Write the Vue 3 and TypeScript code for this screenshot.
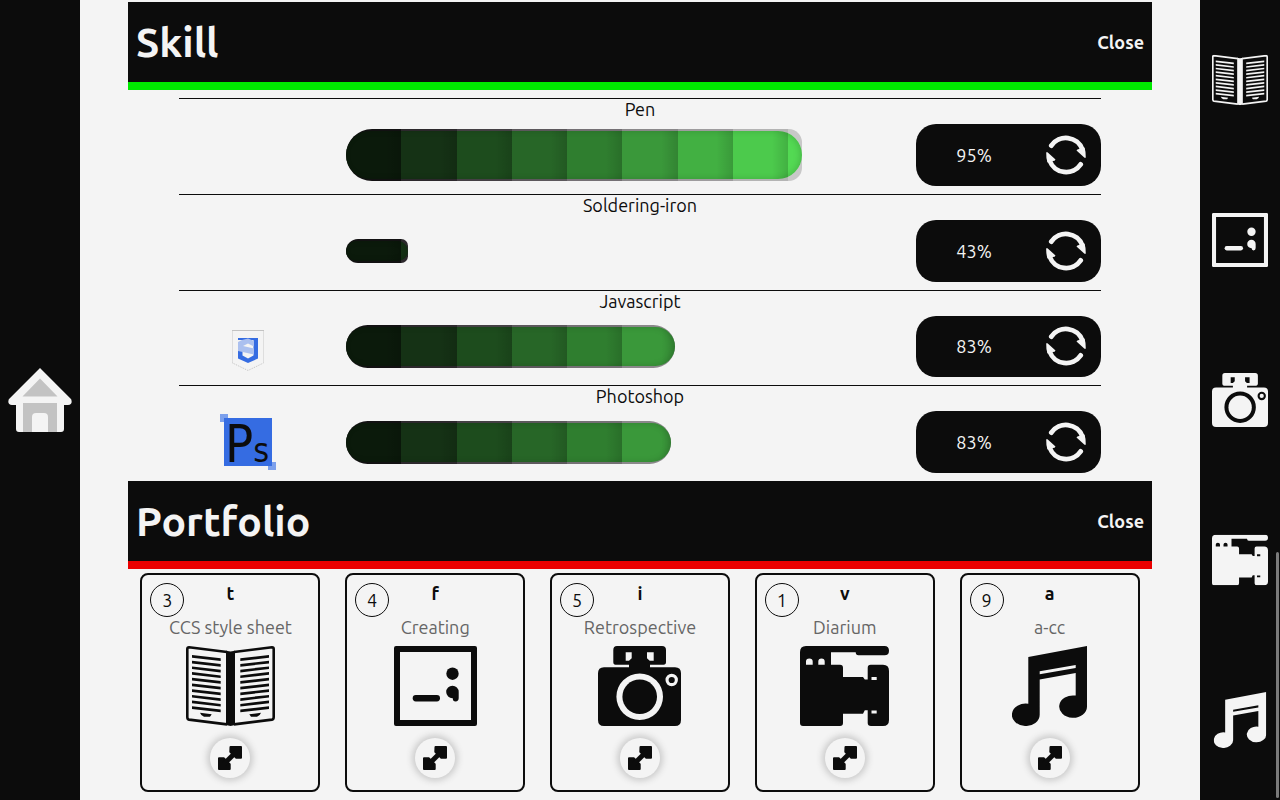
<script setup lang="ts">
import { ref } from 'vue'

type IconName = 'book' | 'frame' | 'camera' | 'video' | 'music'

interface Skill {
  name: string
  percent: number
  fill: number
  thickness: number
  logo?: 'script' | 'photo'
}

interface Work {
  count: number
  key: string
  title: string
  icon: IconName
}

const skills: Skill[] = [
  { name: 'Pen', percent: 95, fill: 82.4, thickness: 52 },
  { name: 'Soldering-iron', percent: 43, fill: 11.2, thickness: 24 },
  { name: 'Javascript', percent: 83, fill: 59.4, thickness: 43, logo: 'script' },
  { name: 'Photoshop', percent: 83, fill: 58.7, thickness: 43, logo: 'photo' },
]

const works: Work[] = [
  { count: 3, key: 't', title: 'CCS style sheet', icon: 'book' },
  { count: 4, key: 'f', title: 'Creating', icon: 'frame' },
  { count: 5, key: 'i', title: 'Retrospective', icon: 'camera' },
  { count: 1, key: 'v', title: 'Diarium', icon: 'video' },
  { count: 9, key: 'a', title: 'a-cc', icon: 'music' },
]

const viewBoxes: Record<IconName, string> = {
  book: '0 0 89 80',
  frame: '0 0 83 80',
  camera: '0 0 83 80',
  video: '0 0 89 80',
  music: '0 0 75 80',
}

const lines = Array.from({ length: 10 }, (_, i) => 9 + i * 5.7)
const skillOpen = ref(true)
const worksOpen = ref(true)

// The end cap can be no rounder than the last, partly filled, segment is wide.
function meterStyle(s: Skill) {
  return {
    width: s.fill + '%',
    height: s.thickness + 'px',
    '--left-cap': s.thickness / 2 + 'px',
    '--right-cap': `min(${s.thickness / 2}px, ${(s.fill % 10).toFixed(1)}cqw)`,
  }
}
</script>

<template>
  <svg class="sprite" aria-hidden="true">
    <symbol id="book" :viewBox="viewBoxes.book">
      <g fill="none" stroke="currentColor" stroke-width="2.6" stroke-linejoin="round">
        <path d="M41 6 3 1.3Q1.3 1.3 1.3 3V71Q1.3 73.3 3 73.6L41 78.4" />
        <path d="M48 6 86 1.3Q87.7 1.3 87.7 3V71Q87.7 73.3 86 73.6L48 78.4" />
      </g>
      <path d="M40 4.7 44.5 5.5 49 4.7V79L44.5 80 40 79Z" fill="currentColor" />
      <g v-for="y in lines" :key="y" fill="currentColor">
        <path :d="`M6 ${y}L34.7 ${y + 3.3}V${y + 6}L6 ${y + 2.7}Z`" />
        <path :d="`M83 ${y}L54.3 ${y + 3.3}V${y + 6}L83 ${y + 2.7}Z`" />
      </g>
      <path d="M14 66.8 25.7 68.2 24 70.7H18Q15 70 14 66.8ZM75 66.8 63.3 68.2 65 70.7H71Q74 70 75 66.8Z" fill="currentColor" />
    </symbol>
    <symbol id="frame" :viewBox="viewBoxes.frame">
      <path fill="currentColor" fill-rule="evenodd" d="M2 0H81Q83 0 83 2V78Q83 80 81 80H2Q0 80 0 78V2Q0 0 2 0ZM6 6V74H77V6Z" />
      <g fill="currentColor">
        <circle cx="58.5" cy="27.7" r="6.2" />
        <path d="M52.2 46A6.2 6.2 0 0 1 64.7 46V52Q64.7 55.4 61.5 55.4 58.8 55.4 58.8 52.2A6.2 6.2 0 0 1 52.2 46Z" />
        <rect x="18.7" y="49" width="27.3" height="6.4" rx="3.1" />
      </g>
    </symbol>
    <symbol id="camera" :viewBox="viewBoxes.camera">
      <path
        fill="currentColor"
        fill-rule="evenodd"
        d="M19 0H64Q68 0 68 4V16Q68 18.7 65.5 18.7H52V21.3H77Q83 21.3 83 27.3V74Q83 80 77 80H6Q0 80 0 74V27.3Q0 21.3 6 21.3H31V18.7H17.5Q15.3 18.7 15.3 16V4Q15.3 0 19 0ZM27.7 6.3V14.7H31L33.7 12.3V6.3ZM49 6.3V12.3L51.7 14.7H55.7V6.3ZM18.4 50.7A23.3 23.3 0 1 0 65 50.7 23.3 23.3 0 1 0 18.4 50.7ZM67.5 34A6.2 6.2 0 1 0 79.9 34 6.2 6.2 0 1 0 67.5 34Z"
      />
      <circle cx="41.7" cy="50.7" r="17.3" fill="currentColor" />
      <circle cx="73.7" cy="34" r="3.1" fill="currentColor" />
    </symbol>
    <symbol id="video" :viewBox="viewBoxes.video">
      <path
        fill="currentColor"
        fill-rule="evenodd"
        d="M6 0H84.5Q89 0 89 4.7 89 9.3 84.5 9.3H58.5Q55.7 9.3 55.7 6.3H31V18.7H40Q43 18.7 43 21.7V31H63L64.8 33.5H67.7V21.7Q67.7 18.7 70.7 18.7H83Q89 18.7 89 25V74Q89 80 83 80H71Q67.7 80 67.7 77V64.3H64.8L63 67.7H43V77Q43 80 40 80H3Q0 80 0 77V6Q0 0 6 0ZM6 18.7H12.7V15.5Q12.7 12.5 9.3 12.5 6 12.5 6 15.5ZM18.3 18.7H24.7V15.5Q24.7 12.5 21.5 12.5 18.3 12.5 18.3 15.5ZM71.5 31V34H76.7V31ZM71.5 64.5V67.5H76.7V64.5Z"
      />
    </symbol>
    <symbol id="music" :viewBox="viewBoxes.music">
      <path
        fill="currentColor"
        fill-rule="evenodd"
        d="M16.3 11 75 0V60.5A13.9 11.2 0 1 1 63.7 49.6V27L27.7 33.5V68.8A13.9 11.2 0 1 1 16.3 57.8ZM27.7 25.3V28.3L63.7 22V19Z"
      />
    </symbol>
    <symbol id="refresh" viewBox="0 0 40 40">
      <g v-for="turn in [0, 180]" :key="turn" :transform="`rotate(${turn} 20 20)`">
        <path d="M5.3 10.6A17.6 17.6 0 0 1 36.4 14.5" fill="none" stroke="currentColor" stroke-width="4.8" stroke-linecap="round" />
        <path d="M30.5 15.5Q31 14 33 14L38.5 12.5Q40 17 39.8 22.8L38.5 22.8Z" fill="currentColor" />
      </g>
    </symbol>
    <symbol id="expand" viewBox="0 0 24 24">
      <g fill="currentColor" stroke="currentColor" stroke-linejoin="round" stroke-width="2">
        <path d="M12.5 1H23V11.7H18.3L12.3 5.7ZM1 12.3H5.7L11.7 18.3V23H1Z" />
        <path d="M6 18 18 6" stroke-width="5" />
      </g>
    </symbol>
  </svg>

  <div class="page">
    <aside class="side">
      <a class="home" href="#home" aria-label="Home">
        <svg viewBox="0 0 64 64">
          <path d="M32 0 63.2 31.2Q65 37 60 37H56V61Q56 64 53 64H11Q8 64 8 61V37H4Q-1 37 .8 31.2Z" fill="#f4f4f4" />
          <path d="M32 10.5 49.5 28.5H14.5ZM15 35H49V64H40V49Q40 45 36 45H28Q24 45 24 49V64H15Z" fill="#c3c3c3" />
        </svg>
      </a>
    </aside>

    <main class="main">
      <section>
        <header class="bar skill-bar">
          <h2>Skill</h2>
          <button type="button" class="close" @click="skillOpen = !skillOpen">Close</button>
        </header>
        <ul v-if="skillOpen" class="skills">
          <li v-for="s in skills" :key="s.name" class="skill">
            <h3>{{ s.name }}</h3>
            <div class="skill-body">
              <div class="logo">
                <svg v-if="s.logo === 'script'" viewBox="0 0 56 56" aria-hidden="true">
                  <path d="M12.5 12V45M43.5 45V12" stroke="#dedede" />
                  <path d="M12 12.5H44" stroke="#c3c3c3" />
                  <path d="M12.5 45 28 52.5 43.5 45" fill="none" stroke="#c3c3c3" stroke-dasharray="1 1" />
                  <path d="M18 20H38V40.5L28 45 18 40.5V33H22.5V37.5L28 40.5 33.5 37.5V22H18Z" fill="#356ce2" />
                  <path
                    fill="#abc0ef"
                    fill-rule="evenodd"
                    d="M18 24 22 22 28 20.5 34 23V36.5L18 33ZM23 28 34 30.5V28.5L28 25.5Z"
                  />
                </svg>
                <svg v-else-if="s.logo === 'photo'" viewBox="0 0 56 56" aria-hidden="true">
                  <path d="M0 0H8V8H0ZM48 48H56V56H48Z" fill="#7ca0ec" />
                  <path d="M4 4H52V52H4Z" fill="#356ce2" />
                  <text class="logo-text" x="5" y="48">P<tspan class="logo-s">s</tspan></text>
                </svg>
              </div>
              <div class="track">
                <div class="meter" :style="meterStyle(s)"></div>
              </div>
              <button type="button" class="redo" :aria-label="`${s.name} ${s.percent}%`">
                <span>{{ s.percent }}%</span>
                <svg><use href="#refresh" /></svg>
              </button>
            </div>
          </li>
        </ul>
      </section>

      <section>
        <header class="bar works-bar">
          <h2>Portfolio</h2>
          <button type="button" class="close" @click="worksOpen = !worksOpen">Close</button>
        </header>
        <div v-if="worksOpen" class="works">
          <article v-for="w in works" :key="w.key" class="card">
            <span class="count">{{ w.count }}</span>
            <h3>{{ w.key }}</h3>
            <p>{{ w.title }}</p>
            <svg class="art" :viewBox="viewBoxes[w.icon]"><use :href="'#' + w.icon" /></svg>
            <button type="button" class="open" :aria-label="`Open ${w.title}`">
              <svg><use href="#expand" /></svg>
            </button>
          </article>
        </div>
      </section>
    </main>

    <nav class="side">
      <a v-for="w in works" :key="w.key" href="#portfolio" :aria-label="w.title">
        <svg :viewBox="viewBoxes[w.icon]"><use :href="'#' + w.icon" /></svg>
      </a>
      <span class="thumb"></span>
    </nav>
  </div>
</template>

<style>
body {
  margin: 0;
  background: #f4f4f4;
}
</style>

<style scoped>
.page {
  display: grid;
  grid-template-columns: 80px 1fr 80px;
  min-height: 100vh;
  color: #0c0c0c;
  font: 18px/20px Ubuntu, "Noto Sans", sans-serif;
}

.sprite {
  position: absolute;
  width: 0;
  height: 0;
}

h2,
h3,
p,
ul {
  margin: 0;
  padding: 0;
}

button {
  border: 0;
  padding: 0;
  background: none;
  color: inherit;
  font: inherit;
  cursor: pointer;
}

.side {
  position: relative;
  display: flex;
  flex-direction: column;
  background: #0c0c0c;
  color: #f4f4f4;
}

.side a {
  flex: 1;
  display: grid;
  place-items: center;
  color: inherit;
}

.side a svg {
  width: 56px;
  height: 56px;
}

.side .home svg {
  width: 64px;
  height: 64px;
}

.thumb {
  position: absolute;
  right: 1px;
  bottom: 2px;
  width: 3px;
  height: 246px;
  border-radius: 2px;
  background: #7b7b7b;
}

.main {
  padding: 2px 48px 0;
}

.bar {
  display: flex;
  align-items: center;
  justify-content: space-between;
  height: 80px;
  padding: 0 8px;
  border-bottom: 8px solid;
  background: #0c0c0c;
}

.skill-bar {
  border-color: #00ea00;
}

.works-bar {
  border-color: #ea0000;
}

.bar h2 {
  color: #f4f4f4;
  font-size: 41px;
  line-height: 48px;
}

.close {
  color: #f4f4f4;
  font-weight: bold;
}

.skills {
  display: grid;
  grid-auto-rows: 1fr;
  min-height: 383px;
  margin-top: 8px;
  padding: 0 5%;
  list-style: none;
}

.skill {
  display: flex;
  flex-direction: column;
  padding-bottom: 8px;
  border-top: 1px solid #0c0c0c;
}

.skill h3 {
  margin-bottom: 5px;
  font-size: 18px;
  font-weight: normal;
  text-align: center;
}

.skill-body {
  flex: 1;
  display: grid;
  grid-template-columns: 15% 60% 20%;
  justify-content: space-between;
}

.logo {
  display: grid;
  place-items: center;
}

.logo svg {
  width: 56px;
  height: 56px;
  overflow: visible;
}

.logo-text {
  fill: #0c0c0c;
  font: 52px/1 "DejaVu Sans Condensed", "DejaVu Sans", sans-serif;
}

.logo-s {
  font-size: 34px;
}

.track {
  container-type: inline-size;
  display: flex;
  align-items: center;
  margin: 0 -6px 0 6px;
}

.meter {
  box-sizing: border-box;
  display: grid;
  padding: 2px 0;
  border-radius: var(--left-cap) var(--right-cap) var(--right-cap) var(--left-cap);
  background: linear-gradient(
    90deg,
    #121112 10cqw,
    #2c282c 0 20cqw,
    #444044 0 30cqw,
    #5c585c 0 40cqw,
    #747074 0 50cqw,
    #8a888a 0 60cqw,
    #9e9c9e 0 70cqw,
    #b4b4b4 0 80cqw,
    #c8c8c8 0
  );
}

.meter::before {
  content: "";
  border-radius: 26px;
  box-shadow: inset -2px 0 6px rgb(0 0 0 / 15%);
  background:
    repeating-linear-gradient(90deg, transparent 0 7cqw, rgb(0 0 0 / 13%) 10cqw),
    linear-gradient(
      90deg,
      #0b1a0b 10cqw,
      #153215 0 20cqw,
      #1d4c1d 0 30cqw,
      #276627 0 40cqw,
      #2f7e2f 0 50cqw,
      #3a983a 0 60cqw,
      #42b042 0 70cqw,
      #4cca4c 0 80cqw,
      #53d953 0
    );
}

.redo {
  display: grid;
  grid-template-columns: 5fr 3fr;
  place-items: center;
  border-radius: 20px;
  background: #0c0c0c;
  color: #f4f4f4;
}

.redo svg {
  width: 40px;
  height: 40px;
}

.works {
  display: grid;
  grid-template-columns: repeat(5, 1fr);
  justify-items: center;
  padding: 4px 0 8px;
}

.card {
  position: relative;
  box-sizing: border-box;
  display: flex;
  flex-direction: column;
  align-items: center;
  width: 180px;
  padding: 8px 0 12px;
  border: 2px solid #0c0c0c;
  border-radius: 8px;
}

.count {
  position: absolute;
  top: 8px;
  left: 8px;
  box-sizing: border-box;
  width: 34px;
  border: 1px solid #0c0c0c;
  border-radius: 50%;
  line-height: 32px;
  text-align: center;
}

.card h3 {
  font-size: 18px;
}

.card p {
  margin: 14px 0 9px;
  color: #666;
}

.art {
  height: 80px;
}

.open {
  display: grid;
  place-items: center;
  width: 40px;
  height: 40px;
  margin-top: 12px;
  border-radius: 50%;
  box-shadow: 0 0 6px 3px #ccc;
}

.open svg {
  width: 24px;
  height: 24px;
}
</style>
